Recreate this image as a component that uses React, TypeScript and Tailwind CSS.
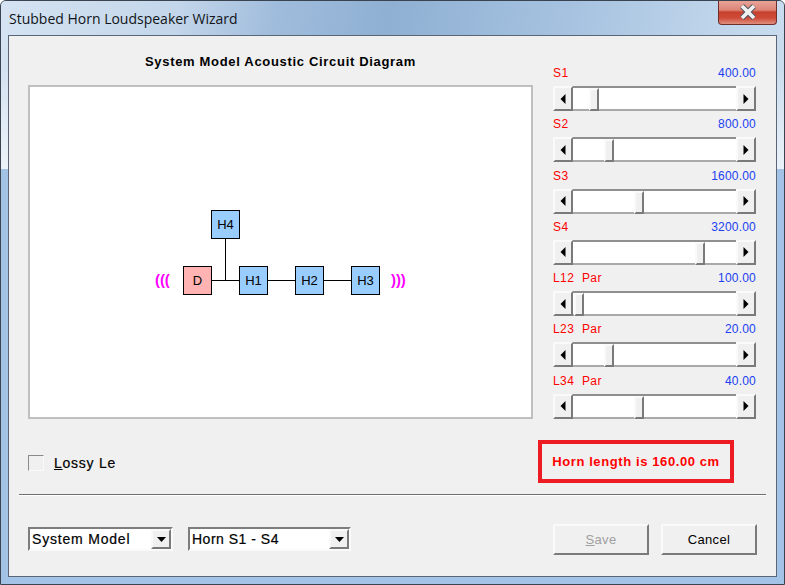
const sans = { fontFamily: '"Liberation Sans", Arial, sans-serif' };

function Arrow({ dir }: { dir: "left" | "right" | "down" }) {
  if (dir === "left") return <svg width="6" height="10" viewBox="0 0 6 10"><path d="M5.500 0v10L0.500 5z" fill="#000" /></svg>;
  if (dir === "right") return <svg width="6" height="10" viewBox="0 0 6 10"><path d="M0.500 0v10L5.500 5z" fill="#000" /></svg>;
  return <svg width="9" height="5" viewBox="0 0 9 5"><path d="M0 0h9L4.500 5z" fill="#000" /></svg>;
}

function RaisedBtn({ className, children, left }: { className?: string; children?: React.ReactNode; left?: number }) {
  return (
    <div
      className={`flex items-center justify-center bg-[#f0f0f0] border-t-2 border-l-2 border-t-[#fafafa] border-l-[#fafafa] border-b-2 border-r-2 border-b-[#7a7a7a] border-r-[#7a7a7a] ${className ?? ""}`}
      style={left === undefined ? undefined : { left }}
    >
      {children}
    </div>
  );
}

function Slider({ label, value, left }: { label: string; value: string; left: number }) {
  return (
    <div className="flex flex-col h-[51.3px]">
      <div className="flex justify-between h-[13px] w-[203px] text-[12px] leading-[13px] tracking-[0.2px]" style={sans}>
        <span className="text-[#ff0000] tracking-[0.4px] [word-spacing:4px]">{label}</span>
        <span className="text-[#2040f0]">{value}</span>
      </div>
      <div className="flex h-[25px] w-[203px] mt-[6px] border-t-2 border-b-2 border-t-[#8f8f8f] border-b-[#a9a9a9] bg-white">
        <RaisedBtn className="w-[20px] -my-[2px] shrink-0"><Arrow dir="left" /></RaisedBtn>
        <div className="flex-1 relative">
          <RaisedBtn className="absolute top-0 -bottom-[2px] w-[10px]" left={left} />
        </div>
        <RaisedBtn className="w-[20px] -my-[2px] shrink-0"><Arrow dir="right" /></RaisedBtn>
      </div>
    </div>
  );
}

function Node({ label, x, y, pink }: { label: string; x: number; y: number; pink?: boolean }) {
  return (
    <div
      className={`absolute w-[29px] h-[29px] border border-black flex items-center justify-center text-[13px] text-black ${pink ? "bg-[#ffb3b3]" : "bg-[#99ccff]"}`}
      style={{ left: x - 30, top: y - 87, ...sans }}
    >
      {label}
    </div>
  );
}

function Wire({ x, y, w, h }: { x: number; y: number; w: number; h: number }) {
  return <div className="absolute bg-black" style={{ left: x - 30, top: y - 87, width: w, height: h }} />;
}

function Combo({ text, w, spacing }: { text: string; w: string; spacing: string }) {
  return (
    <div className={`flex items-center h-[24px] bg-white border-2 border-t-[#7d7d7d] border-l-[#7d7d7d] border-b-[#fafafa] border-r-[#fafafa] ${w}`}>
      <span className={`flex-1 pl-[2px] text-[14px] text-black whitespace-nowrap [-webkit-text-stroke:0.2px_black] ${spacing}`} style={sans}>{text}</span>
      <RaisedBtn className="w-[20px] h-[20px] shrink-0"><Arrow dir="down" /></RaisedBtn>
    </div>
  );
}

export default function App() {
  const sliders = [
    { label: "S1", value: "400.00", left: 16 },
    { label: "S2", value: "800.00", left: 31 },
    { label: "S3", value: "1600.00", left: 61 },
    { label: "S4", value: "3200.00", left: 122 },
    { label: "L12 Par", value: "100.00", left: 1 },
    { label: "L23 Par", value: "20.00", left: 31 },
    { label: "L34 Par", value: "40.00", left: 61 },
  ];
  return (
    <div className="relative w-[785px] h-[585px] flex flex-col overflow-hidden rounded-t-[6px] border border-[#3a4350] bg-[#a3c3e6]">
      <div className="absolute inset-x-0 top-0 h-[168px] bg-[linear-gradient(180deg,rgba(255,255,255,0)_40%,rgba(255,255,255,0.6)_100%),linear-gradient(100deg,#d5e3f2_0%,#c3d6ea_22%,#a0bcdc_34%,#8fb0d3_48%,#a6c2e0_70%,#bed4ea_88%,#cddff0_100%)]" />
      <div className="relative h-[34px] shrink-0 flex items-start justify-between">
        <span className="pl-[8px] pt-[9px] text-[14px] leading-[18px] text-[#101418]" style={{ fontFamily: '"Open Sans", sans-serif' }}>Stubbed Horn Loudspeaker Wizard</span>
        <div className="mr-[7px] -mt-[1px] w-[59px] h-[25px] flex items-center justify-center rounded-b-[4px] border border-t-0 border-[#6e2e2c] bg-[linear-gradient(180deg,#e9a79c_0%,#dd8576_42%,#c8402e_50%,#cf4a38_75%,#e0907f_100%)]">
          <svg width="20" height="16" viewBox="0 0 20 16">
            <path d="M4 2L16 14M16 2L4 14" stroke="#4a5260" strokeWidth="5.500" fill="none" />
            <path d="M4 2L16 14M16 2L4 14" stroke="#f0f0f0" strokeWidth="3.800" fill="none" />
          </svg>
        </div>
      </div>
      <div className="relative mx-[7px] mb-[7px] flex-1 flex flex-col bg-[#f0f0f0] border border-[#5a6675]">
        <div className="flex flex-1">
          <div className="w-[524px] pl-[19px] pt-[16px] shrink-0">
            <div className="h-[33px] w-[505px] text-center text-[13px] leading-[20px] font-bold tracking-[0.68px] text-black" style={sans}>System Model Acoustic Circuit Diagram</div>
            <div className="relative w-[505px] h-[334px] bg-white border-2 border-[#bfbfbf]">
              <Wire x={225} y={238} w={1} h={43} />
              <Wire x={211} y={280} w={141} h={1} />
              <Node label="H4" x={211} y={210} />
              <Node label="D" x={183} y={266} pink />
              <Node label="H1" x={239} y={266} />
              <Node label="H2" x={295} y={266} />
              <Node label="H3" x={351} y={266} />
              <span className="absolute left-[125px] top-[183px] text-[15px] leading-[20px] font-bold text-[#ff00ff] tracking-[-0.1px]" style={sans}>(((</span>
              <span className="absolute left-[361px] top-[183px] text-[15px] leading-[20px] font-bold text-[#ff00ff] tracking-[-0.1px]" style={sans}>)))</span>
            </div>
            <div className="flex items-center mt-[34px] h-[20px]">
              <div className="w-[16px] h-[16px] bg-[#f0f0f0] border border-t-[#8a8a8a] border-l-[#8a8a8a] border-b-[#fafafa] border-r-[#fafafa]" />
              <span className="ml-[10px] text-[14px] tracking-[0.75px] text-black [-webkit-text-stroke:0.2px_black]" style={sans}><span className="underline">L</span>ossy Le</span>
            </div>
          </div>
          <div className="pl-[20px] pt-[31px] flex-1 min-w-0">
            {sliders.map((s) => (
              <Slider key={s.label} label={s.label} value={s.value} left={s.left} />
            ))}
            <div className="mt-[14px] ml-[-15px] w-[196px] h-[43px] border-[4px] border-[#ed1c24] flex items-center justify-center text-[13px] font-bold tracking-[0.6px] text-[#ff0000]" style={sans}>Horn length is 160.00 cm</div>
          </div>
        </div>
        <div className="mx-[10px] h-[2px] border-t border-t-[#6f6f6f] border-b border-b-white" />
        <div className="h-[80px] flex pl-[19px] pt-[31px] items-start">
          <Combo text="System Model" w="w-[145px]" spacing="tracking-[0.8px]" />
          <div className="w-[15px]" />
          <Combo text="Horn S1 - S4" w="w-[163px]" spacing="tracking-[0.5px]" />
          <div className="ml-[202px] flex gap-[12px] -mt-[3px]">
            <RaisedBtn className="w-[96px] h-[31px] text-[13px] tracking-[0.3px] text-[#a0a0a0]"><span style={sans}><span className="underline">S</span>ave</span></RaisedBtn>
            <RaisedBtn className="w-[96px] h-[31px] text-[13px] tracking-[0.3px] text-black"><span style={sans}>Cancel</span></RaisedBtn>
          </div>
        </div>
      </div>
    </div>
  );
}
